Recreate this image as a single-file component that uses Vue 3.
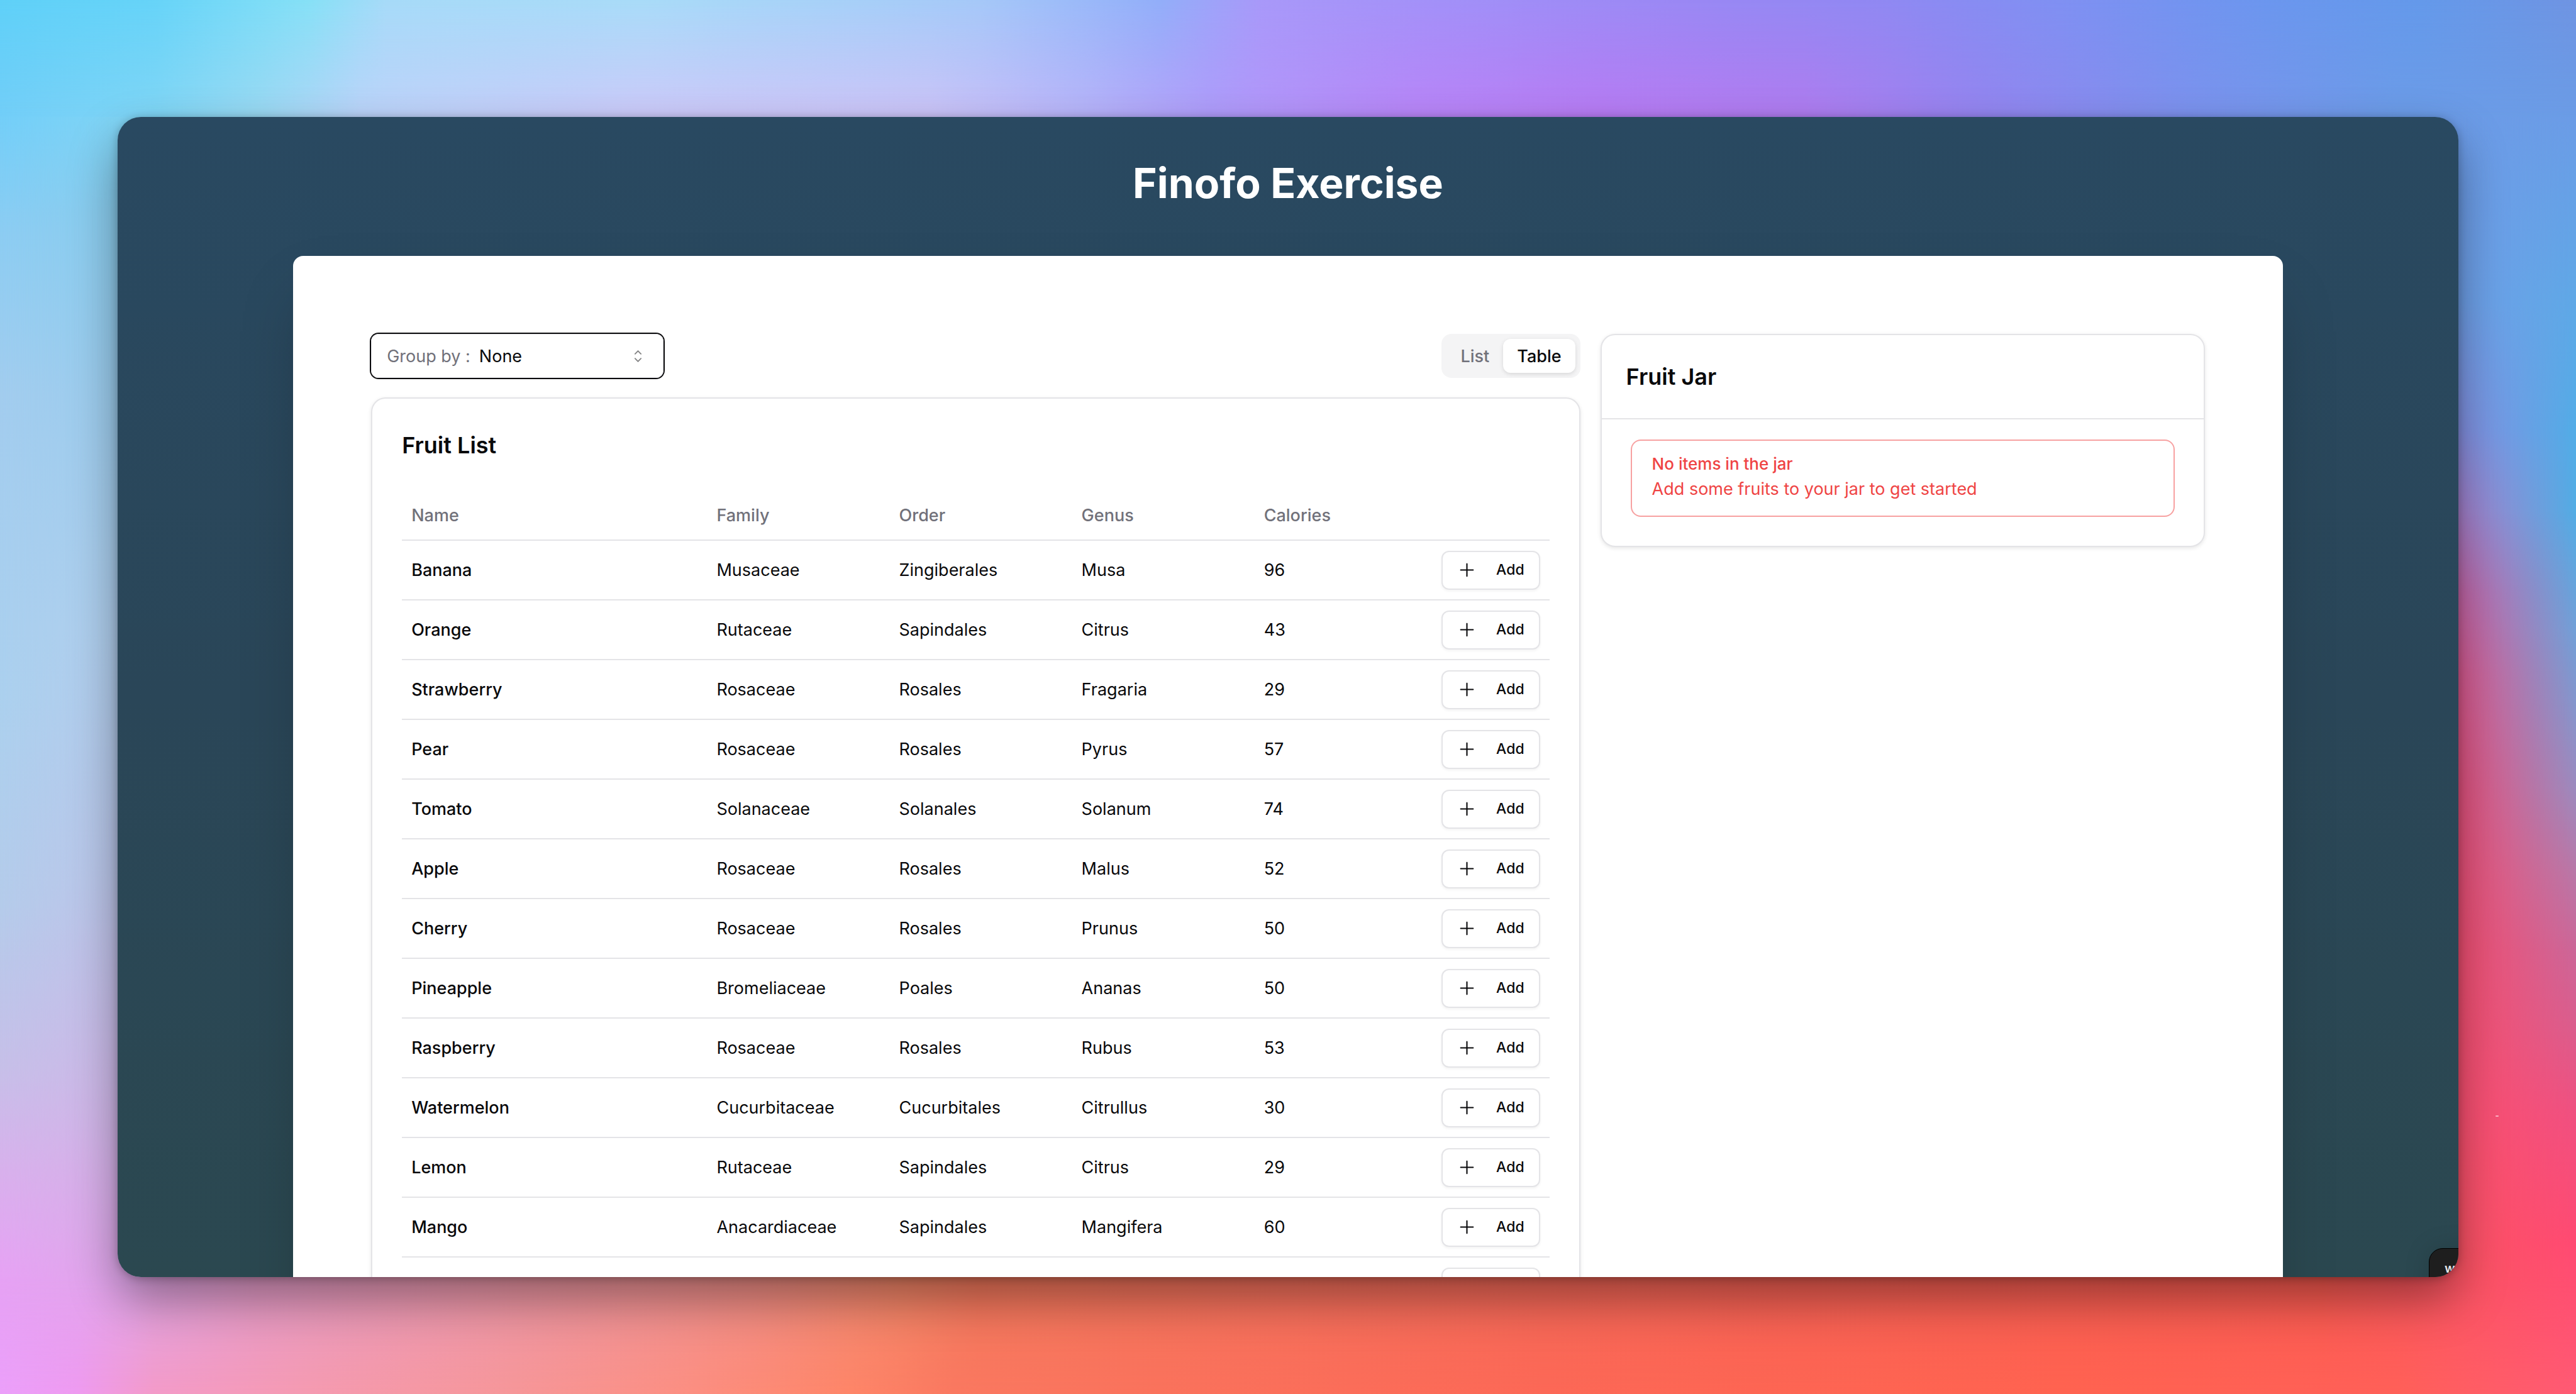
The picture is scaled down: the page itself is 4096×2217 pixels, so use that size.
<script setup>
import { ref } from 'vue'

const columns = ['Name', 'Family', 'Order', 'Genus', 'Calories']

const fruits = [
  ['Banana', 'Musaceae', 'Zingiberales', 'Musa', 96],
  ['Orange', 'Rutaceae', 'Sapindales', 'Citrus', 43],
  ['Strawberry', 'Rosaceae', 'Rosales', 'Fragaria', 29],
  ['Pear', 'Rosaceae', 'Rosales', 'Pyrus', 57],
  ['Tomato', 'Solanaceae', 'Solanales', 'Solanum', 74],
  ['Apple', 'Rosaceae', 'Rosales', 'Malus', 52],
  ['Cherry', 'Rosaceae', 'Rosales', 'Prunus', 50],
  ['Pineapple', 'Bromeliaceae', 'Poales', 'Ananas', 50],
  ['Raspberry', 'Rosaceae', 'Rosales', 'Rubus', 53],
  ['Watermelon', 'Cucurbitaceae', 'Cucurbitales', 'Citrullus', 30],
  ['Lemon', 'Rutaceae', 'Sapindales', 'Citrus', 29],
  ['Mango', 'Anacardiaceae', 'Sapindales', 'Mangifera', 60],
  ['', '', '', '', ''],
]

const views = ['List', 'Table']
const view = ref('Table')
const groupBy = ref('None')
</script>

<template>
  <div class="page">
    <div class="backdrop" aria-hidden="true">
      <div class="strip strip-top"></div>
      <div class="strip strip-left"></div>
      <div class="strip strip-right"></div>
      <div class="strip strip-bottom"></div>
      <span class="speck"></span>
    </div>

    <div class="window">
      <header class="title-bar">
        <h1>Finofo Exercise</h1>
      </header>

      <main class="panel">
        <section class="fruits">
          <div class="toolbar">
            <div class="group-by">
              <label for="group-by">Group by :</label>
              <select id="group-by" v-model="groupBy">
                <option>None</option>
              </select>
              <svg class="caret" viewBox="0 0 15 15" aria-hidden="true">
                <path
                  d="M4.93179 5.43179C4.75605 5.60753 4.75605 5.89245 4.93179 6.06819C5.10753 6.24392 5.39245 6.24392 5.56819 6.06819L7.49999 4.13638L9.43179 6.06819C9.60753 6.24392 9.89245 6.24392 10.0682 6.06819C10.2439 5.89245 10.2439 5.60753 10.0682 5.43179L7.81819 3.18179C7.73379 3.0974 7.61933 3.04999 7.49999 3.04999C7.38064 3.04999 7.26618 3.0974 7.18179 3.18179L4.93179 5.43179ZM10.0682 9.56819C10.2439 9.39245 10.2439 9.10753 10.0682 8.93179C9.89245 8.75606 9.60753 8.75606 9.43179 8.93179L7.49999 10.8636L5.56819 8.93179C5.39245 8.75606 5.10753 8.75606 4.93179 8.93179C4.75605 9.10753 4.75605 9.39245 4.93179 9.56819L7.18179 11.8182C7.35753 11.9939 7.64245 11.9939 7.81819 11.8182L10.0682 9.56819Z"
                  fill="currentColor"
                  fill-rule="evenodd"
                  clip-rule="evenodd"
                />
              </svg>
            </div>

            <div class="view-switch">
              <button
                v-for="name in views"
                :key="name"
                type="button"
                class="view"
                :class="{ active: view === name }"
                :aria-pressed="view === name"
                @click="view = name"
              >
                {{ name }}
              </button>
            </div>
          </div>

          <div class="card list-card">
            <h2>Fruit List</h2>
            <table>
              <thead>
                <tr>
                  <th v-for="column in columns" :key="column" scope="col">{{ column }}</th>
                  <td></td>
                </tr>
              </thead>
              <tbody>
                <tr v-for="(fruit, row) in fruits" :key="row">
                  <td v-for="(value, i) in fruit" :key="i" :class="{ name: i === 0 }">{{ value }}</td>
                  <td class="action">
                    <button type="button" class="add">
                      <svg viewBox="0 0 15 15" aria-hidden="true">
                        <path
                          d="M8 2.75C8 2.47386 7.77614 2.25 7.5 2.25C7.22386 2.25 7 2.47386 7 2.75V7H2.75C2.47386 7 2.25 7.22386 2.25 7.5C2.25 7.77614 2.47386 8 2.75 8H7V12.25C7 12.5261 7.22386 12.75 7.5 12.75C7.77614 12.75 8 12.5261 8 12.25V8H12.25C12.5261 8 12.75 7.77614 12.75 7.5C12.75 7.22386 12.5261 7 12.25 7H8V2.75Z"
                          fill="currentColor"
                          fill-rule="evenodd"
                          clip-rule="evenodd"
                        />
                      </svg>
                      <span v-if="fruit[0]">Add</span>
                    </button>
                  </td>
                </tr>
              </tbody>
            </table>
          </div>
        </section>

        <aside class="card jar">
          <header class="jar-header">
            <h2>Fruit Jar</h2>
          </header>
          <div class="jar-body">
            <div class="alert" role="alert">
              <h3>No items in the jar</h3>
              <p>Add some fruits to your jar to get started</p>
            </div>
          </div>
        </aside>
      </main>

      <div class="badge">w</div>
    </div>
  </div>
</template>

<style>
body {
  margin: 0;
}
</style>

<style scoped>
* {
  box-sizing: border-box;
}

.page {
  position: relative;
  height: 100vh;
  padding: 186px 187px;
  overflow: hidden;
  color: #09090b;
  font-family: Inter, 'Liberation Sans', sans-serif;
  font-size: 27px;
  line-height: 39px;
}

h1,
h2,
h3,
p {
  margin: 0;
}

button,
select {
  padding: 0;
  border: 0;
  background: none;
  color: inherit;
  font: inherit;
}

/* Colourful wallpaper: each strip blends an outer gradient into an inner one */
.backdrop {
  position: absolute;
  inset: 0;
  display: grid;
  grid-template: 186px 1fr 186px / 1fr 1fr;
}

.strip {
  display: grid;
}

.strip::before {
  content: '';
}

.strip-top,
.strip-bottom {
  grid-column: 1 / -1;
}

.strip-top {
  background: linear-gradient(to right, #72cef8, #80d6f6 6%, #9ad9f3 10%, #bcd4fa 14%, #cdcafa 25%, #ccc4f8 36%, #b8b4fa 42%, #b09cfb 47%, #b985f8 55%, #b87bf4 62%, #b07cf0 70%, #9485f0 77%, #7c92ee 85%, #6c9ce8 93%, #6b9ce6);
}

.strip-top::before {
  background: linear-gradient(to right, #5fd0f8, #66d3f8 6%, #86e0f6 12%, #a6daf8 15%, #a8dbf8 25%, #a5c8f8 38%, #92aef9 45%, #a898f9 49%, #a290f8 56%, #9a88f4 65%, #9088f2 73%, #7f90f2 80%, #6b96ee 88%, #6499ea 94%, #6f94e2);
  mask-image: linear-gradient(to bottom, #000, transparent);
}

.strip-left {
  background: linear-gradient(to bottom, #80d5f6, #8acdee 8%, #9acdee 22%, #b0cfee 44%, #bcc6ea 66%, #d0b6e8 86%, #e0a6ea);
}

.strip-left::before {
  background: linear-gradient(to bottom, #72cef8, #8cccf2 10%, #a2ccee 24%, #abd0ee 50%, #b4cbea 68%, #c6bfe8 82%, #d8b0ec 91%, #e6a2f4);
  mask-image: linear-gradient(to right, #000, transparent 187px);
}

.strip-right {
  background: linear-gradient(to bottom, #6c9ce8, #6f9fe8 16%, #8590e2 27%, #a880cc 34%, #c866a8 41%, #dc5a90 48%, #e6527e 58%, #f24f72 72%, #fa5070 86%, #fb5462);
}

.strip-right::before {
  background: linear-gradient(to bottom, #6b9ce6, #5fa8e6 16%, #52ace6 27%, #52ace4 34%, #70a0d8 44%, #8595cc 51%, #9c8abe 58%, #b878a8 65%, #cc6698 72%, #dc5c8c 79%, #f05080 86%, #ff4a72 97%, #ff4e72);
  mask-image: linear-gradient(to left, #000, transparent 187px);
}

.strip-bottom {
  background: linear-gradient(to right, #e6a2f4, #e0a6ea 5%, #e49cca 10%, #ec96a6 20%, #f08e88 29%, #f28668 35%, #f2785c 38%, #f4705c 50%, #f66054 70%, #fa5a50 90%, #fb5462 95%, #ff4e72);
}

.strip-bottom::before {
  background: linear-gradient(to right, #eb9ffa, #ee9af0 3%, #f39ac8 6%, #f59ab0 12%, #f69698 20%, #fc8e80 27%, #fe8568 33%, #fa7860 37%, #fa725c 45%, #fc6856 60%, #ff6350 80%, #ff6058 93%, #ff5a74);
  mask-image: linear-gradient(to top, #000, transparent);
}

.speck {
  position: absolute;
  top: 80%;
  right: 3%;
  width: 5px;
  height: 2px;
  border-radius: 1px;
  background: #ffb3c6;
}

.window {
  position: relative;
  height: 100%;
  overflow: hidden;
  border-radius: 37px;
  background: linear-gradient(#294961, #2a4658 50%, #2b4850);
  box-shadow:
    0 36px 76px rgba(0, 0, 0, 0.38),
    0 2px 14px rgba(0, 0, 0, 0.25);
}

.title-bar {
  padding: 66px 0 77px;
  color: #fff;
  text-align: center;
}

h1 {
  font-size: 66px;
  font-weight: 700;
  line-height: 78px;
}

.panel {
  display: grid;
  grid-template-columns: 2fr 1fr;
  align-items: start;
  gap: 32px;
  width: 85%;
  margin: 0 auto;
  padding: 124px;
  border-radius: 16px;
  background: #fff;
  box-shadow: 0 48px 96px -24px rgba(0, 0, 0, 0.25);
}

.toolbar {
  display: flex;
  justify-content: space-between;
  margin-bottom: 31px;
}

.group-by {
  position: relative;
  display: flex;
  align-items: center;
  gap: 14px;
  width: 465px;
  height: 70px;
  padding: 0 25px;
  border-radius: 12px;
  box-shadow:
    0 0 0 2px #09090b,
    inset 0 0 0 1px #e4e4e7;
}

.group-by label {
  color: #71717a;
  white-space: nowrap;
}

.group-by select {
  flex: 1;
  min-width: 0;
  height: 100%;
  appearance: none;
  outline: 0;
}

.caret {
  position: absolute;
  right: 25px;
  width: 31px;
  height: 31px;
  opacity: 0.5;
  pointer-events: none;
}

.view-switch {
  display: flex;
  height: 70px;
  padding: 8px;
  border-radius: 16px;
  background: #f4f4f5;
}

.view {
  padding: 0 22px;
  border-radius: 12px;
  color: #71717a;
  font-weight: 500;
}

.view.active {
  background: #fff;
  color: #09090b;
  box-shadow: 0 2px 6px rgba(0, 0, 0, 0.12);
}

.card {
  border: 2px solid #e4e4e7;
  border-radius: 23px;
  background: #fff;
  box-shadow: 0 2px 6px rgba(0, 0, 0, 0.1);
}

.list-card {
  padding: 47px;
}

h2 {
  font-size: 36px;
  font-weight: 600;
  line-height: 54px;
}

table {
  width: 100%;
  margin-top: 46px;
  border-collapse: collapse;
  table-layout: fixed;
}

th,
td {
  height: 95px;
  padding: 0 15px;
  border-bottom: 2px solid #e4e4e7;
  text-align: left;
}

thead th,
thead td {
  height: 78px;
  color: #71717a;
  font-weight: 500;
}

th {
  width: 15.9%;
}

th:first-child {
  width: 26.6%;
}

.name {
  font-weight: 500;
}

.action {
  padding-left: 0;
  text-align: right;
}

.add {
  display: inline-flex;
  align-items: center;
  justify-content: space-between;
  width: 157px;
  height: 62px;
  padding: 0 23px;
  border: 2px solid #e4e4e7;
  border-radius: 12px;
  background: #fff;
  box-shadow: 0 2px 4px rgba(0, 0, 0, 0.05);
  font-size: 23px;
  font-weight: 500;
  line-height: 31px;
  vertical-align: middle;
}

.add svg {
  width: 31px;
  height: 31px;
}

.jar-header {
  padding: 39px;
  border-bottom: 2px solid #e4e4e7;
}

.jar-body {
  padding: 32px 46px 46px;
}

.alert {
  padding: 23px 32px;
  border: 2px solid rgba(239, 68, 68, 0.5);
  border-radius: 16px;
  color: #ef4444;
}

h3 {
  margin-bottom: 8px;
  font-size: 26px;
  font-weight: 500;
  line-height: 27px;
}

.alert p {
  line-height: 38px;
}

.badge {
  position: absolute;
  right: -54px;
  bottom: -50px;
  width: 101px;
  height: 96px;
  padding: 18px 24px;
  border: 1px solid #000;
  border-radius: 22px;
  background: #1e1e1e;
  box-shadow: 0 0 40px rgba(0, 0, 0, 0.15);
  color: #e4e4e7;
  font-size: 20px;
  font-weight: 600;
  line-height: 27px;
}
</style>
